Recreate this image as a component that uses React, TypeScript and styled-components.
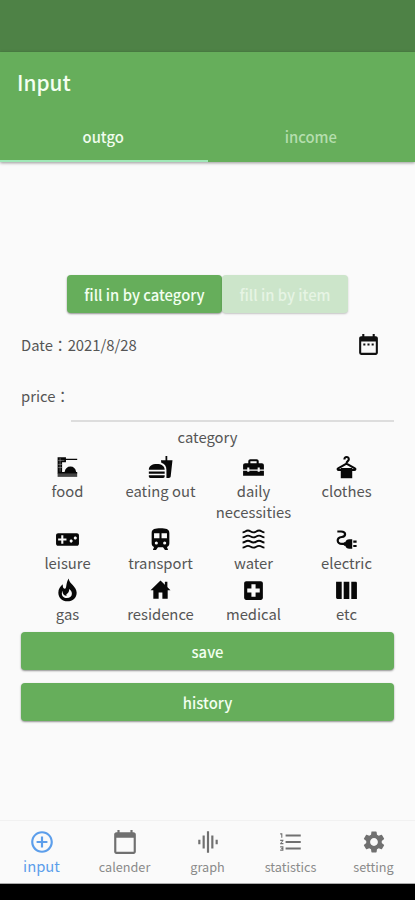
import React from "react";
import styled, { createGlobalStyle } from "styled-components";
import {
  MdDateRange, MdHomeRepairService, MdVideogameAsset,
  MdLocalHospital, MdAddCircleOutline, MdCalendarToday,
  MdGraphicEq, MdFormatListNumbered, MdSettings,
} from "react-icons/md";

const Global = createGlobalStyle`
  * { box-sizing: border-box; }
  body { margin: 0; background: #fafafa; }
  button { font: inherit; border: 0; padding: 0; }
`;

const Screen = styled.div`
  width: 415px;
  height: 900px;
  display: flex;
  flex-direction: column;
  overflow: hidden;
  background: #fafafa;
  color: #555;
  font-family: "Noto Sans CJK JP", "Noto Sans", sans-serif;
  font-size: 14.8px;
  line-height: 21px;
`;

const StatusBar = styled.div`
  height: 52px;
  flex: none;
  background: #4e8246;
`;

const AppBar = styled.header`
  height: 110px;
  flex: none;
  background: #66ae5b;
  color: #f4fff1;
  box-shadow: 0 1px 3px rgba(0, 0, 0, 0.4);
`;

const Title = styled.h1`
  margin: 0;
  height: 60px;
  padding-left: 17px;
  font-size: 20.8px;
  font-weight: 500;
  line-height: 61px;
`;

const Tabs = styled.div`
  display: grid;
  grid-template-columns: 1fr 1fr;
`;

const Tab = styled.button<{ $active?: boolean }>`
  height: 50px;
  padding: 1px 1px 0 0;
  background: none;
  font-weight: 500;
  color: ${(p) => (p.$active ? "#f0fcee" : "#b5deae")};
  border-bottom: ${(p) => (p.$active ? "2px solid #a0e8b7" : "2px solid transparent")};
`;

const Content = styled.main`
  flex: 1;
  padding: 113px 21px 0;
`;

const ToggleGroup = styled.div`
  display: flex;
  justify-content: center;
  height: 38px;
`;

const Button = styled.button<{ $width?: number; $faded?: boolean }>`
  display: block;
  width: ${(p) => (p.$width ? `${p.$width}px` : "100%")};
  height: 38px;
  border-radius: 4px;
  font-weight: 500;
  line-height: 39px;
  color: ${(p) => (p.$faded ? "#e6f4e4" : "#f2fff0")};
  background: ${(p) => (p.$faded ? "#cce5ca" : "#66ae5b")};
  box-shadow: 0 1px 2px rgba(0, 0, 0, ${(p) => (p.$faded ? 0.22 : 0.42)});
`;

const DateRow = styled.div`
  display: flex;
  align-items: center;
  justify-content: space-between;
  height: 26px;
  margin-top: 18px;
  padding-right: 13px;
  svg { color: #111; }
`;

const PriceRow = styled.label`
  display: flex;
  height: 51px;
  margin-top: 14px;
`;

const PriceLabel = styled.span`
  width: 50px;
  padding-top: 14px;
  white-space: nowrap;
`;

const PriceInput = styled.input`
  flex: 1;
  min-width: 0;
  border: 0;
  border-bottom: 2px solid #ddd;
  background: none;
  outline: none;
`;

const Heading = styled.div`
  margin-top: 4px;
  height: 23px;
  text-align: center;
`;

const Categories = styled.div`
  display: grid;
  grid-template-columns: repeat(4, 1fr);
  grid-template-rows: 72px 51px 51px;
  padding-top: 6px;
  margin-right: 1px;
  height: 183px;
`;

const Category = styled.div`
  display: flex;
  flex-direction: column;
  align-items: center;
  text-align: center;
  svg { width: 25px; height: 25px; color: #080808; flex: none; }
`;

const Actions = styled.div`
  display: flex;
  flex-direction: column;
  gap: 13px;
`;

const BottomNav = styled.nav`
  height: 64px;
  flex: none;
  display: grid;
  grid-template-columns: repeat(5, 1fr);
  border-top: 1px solid #f1f1f1;
  border-bottom: 1px solid #aaa;
`;

const NavItem = styled.div<{ $active?: boolean }>`
  display: flex;
  flex-direction: column;
  align-items: center;
  padding-top: 8px;
  gap: ${(p) => (p.$active ? "0" : "1px")};
  color: ${(p) => (p.$active ? "#5c9eeb" : "#8a8a8a")};
  font-size: ${(p) => (p.$active ? "14.8px" : "12.7px")};
  svg { width: 26px; height: 26px; flex: none; color: ${(p) => (p.$active ? "#5c9eeb" : "#707070")}; }
`;

const SystemBar = styled.div`
  height: 16px;
  flex: none;
  background: #000;
`;

const FoodIcon = () => (
  <svg viewBox="0 0 24 24" fill="currentColor">
    <path d="M2.5 2.2h8v1.4h10.8v1.3H10.5V7H6.8v9.2h2.4c.7-3.3 2.7-5.2 5.6-5.2 3 0 5 1.9 5.5 5.2h1V18H2.5z" />
    <path d="M2.5 17.7h18.8V21H2.5z" opacity=".75" />
    <path d="M4.9 3v13M3 5.2h6M3 9h4M3 12h4" stroke="#aaa" strokeWidth=".5" fill="none" />
  </svg>
);

const BurgerIcon = () => (
  <svg viewBox="0 0 24 24" fill="currentColor">
    <path d="M.8 14.2C.8 10.5 4 8.6 8.4 8.6s7.6 1.9 7.6 5.6zM.8 15.9H16v2H.8zM.8 19.5H16v1.1c0 .9-.6 1.4-1.4 1.4H2.2c-.8 0-1.4-.5-1.4-1.4z" />
    <path d="M12.4 5.1h4.4V.9h1.7v4.2h5l-1.7 15.3c-.1 1-.8 1.6-1.8 1.6h-2.3v-7.5c0-3.8-1.8-6.1-4.9-7z" />
  </svg>
);

const HangerIcon = () => (
  <svg viewBox="0 0 24 24">
    <path d="M10 4.2c0-3 4.2-3 4.2-.2 0 2-2.2 1.8-2.2 4.2l8 4.6c1 .7.5 1.6-.5 1.6h-15c-1 0-1.5-.9-.5-1.6l8-4.6" fill="none" stroke="currentColor" strokeWidth="2" />
    <path d="M6.5 12.5h11v9.8h-11z" fill="currentColor" />
  </svg>
);

const TrainIcon = () => (
  <svg viewBox="0 0 24 24">
    <path fill="currentColor" fillRule="evenodd" d="M12 1.2c-5 0-8.5.7-8.5 4.5v9.8c0 2 1 3.2 2.3 3.6L4.7 22h3l1.9-2.6h4.8l1.9 2.6h3l-1.1-2.9c1.3-.4 2.3-1.6 2.3-3.6V5.7c0-3.8-3.5-4.5-8.5-4.5zM5.8 5.9H11v4.8H5.8zm7.2 0h5.2v4.8H13zM8 13.8a1.5 1.5 0 1 1 0 3 1.5 1.5 0 0 1 0-3zm8 0a1.5 1.5 0 1 1 0 3 1.5 1.5 0 0 1 0-3z" />
  </svg>
);

const WaterIcon = () => (
  <svg viewBox="0 0 24 24" fill="none" stroke="currentColor" strokeWidth="1.8">
    {[4.3, 9.2, 14.1, 19].map((y) => (
      <path key={y} d={`M1.5 ${y + 0.8}c2.6 0 2.6-1.7 5.2-1.7s2.6 1.7 5.3 1.7 2.6-1.7 5.3-1.7 2.6 1.7 5.2 1.7`} />
    ))}
  </svg>
);

const PlugIcon = () => (
  <svg viewBox="0 0 24 24">
    <path d="M3.2 4.3h3.6c5 0 5 4.7.7 5.3-5.6.8-5 6.6.3 6.6H12" fill="none" stroke="currentColor" strokeWidth="2.1" />
    <path d="M17.5 11.8v9h-2.8c-2 0-3.3-1-3.9-2.8H9.5v-3.4h1.3c.6-1.8 1.9-2.8 3.9-2.8zM18.5 13h3.2v2h-3.2zM18.5 17.3h3.2v2h-3.2z" fill="currentColor" />
  </svg>
);

const FlameIcon = () => (
  <svg viewBox="0 0 24 24">
    <path fill="currentColor" fillRule="evenodd" d="M13.2.4c0 4.9 7.6 7.2 7.6 13.7 0 5-3.8 8.3-8.8 8.3s-8.8-3.3-8.8-8.2c0-3.6 1.7-5.9 4.3-8.1-.2 2.6.4 4 1.7 4.2C11.6 10.6 10 4.6 13.2.4zM7.2 12.2c-1.7 3.8.3 7 4.1 7 3.2 0 4.9-1.7 4.9-4.1 0-1.8-1-3.3-2.6-4.5.1 3-1.2 4-2.1 4.5-.9.6-.8 1.7.1 2-2.5.4-4.5-1.6-4.4-4.9z" />
  </svg>
);

const HouseIcon = () => (
  <svg viewBox="0 0 24 24" fill="currentColor">
    <path d="M12 2.4l9.6 9.3h-2.7V20h-5.1v-6h-3.6v6H5.1v-8.3H2.4z" />
    <path d="M16.2 3.6h2.4v5.8h-2.4z" />
  </svg>
);

const ColumnsIcon = () => (
  <svg viewBox="0 0 24 24" fill="currentColor">
    <path d="M2 3.5h5.4v16.6H3.3c-.8 0-1.3-.5-1.3-1.3zM9.3 3.5h5.4v16.6H9.3zM16.6 3.5h4.1c.8 0 1.3.5 1.3 1.3v15.3h-5.4z" />
  </svg>
);

const categories = [
  { label: "food", Icon: FoodIcon },
  { label: "eating out", Icon: BurgerIcon },
  { label: "daily necessities", Icon: MdHomeRepairService },
  { label: "clothes", Icon: HangerIcon },
  { label: "leisure", Icon: MdVideogameAsset },
  { label: "transport", Icon: TrainIcon },
  { label: "water", Icon: WaterIcon },
  { label: "electric", Icon: PlugIcon },
  { label: "gas", Icon: FlameIcon },
  { label: "residence", Icon: HouseIcon },
  { label: "medical", Icon: MdLocalHospital },
  { label: "etc", Icon: ColumnsIcon },
];

const navItems = [
  { label: "input", Icon: MdAddCircleOutline },
  { label: "calender", Icon: MdCalendarToday },
  { label: "graph", Icon: MdGraphicEq },
  { label: "statistics", Icon: MdFormatListNumbered },
  { label: "setting", Icon: MdSettings },
];

export default function App() {
  return (
    <Screen>
      <Global />
      <StatusBar />
      <AppBar>
        <Title>Input</Title>
        <Tabs>
          <Tab $active>outgo</Tab>
          <Tab>income</Tab>
        </Tabs>
      </AppBar>
      <Content>
        <ToggleGroup>
          <Button $width={155}>fill in by category</Button>
          <Button $width={126} $faded>fill in by item</Button>
        </ToggleGroup>
        <DateRow>
          <span>Date：2021/8/28</span>
          <MdDateRange size={25} />
        </DateRow>
        <PriceRow>
          <PriceLabel>price：</PriceLabel>
          <PriceInput aria-label="price" />
        </PriceRow>
        <Heading>category</Heading>
        <Categories>
          {categories.map(({ label, Icon }) => (
            <Category key={label}>
              <Icon />
              <span>{label}</span>
            </Category>
          ))}
        </Categories>
        <Actions>
          <Button>save</Button>
          <Button>history</Button>
        </Actions>
      </Content>
      <BottomNav>
        {navItems.map(({ label, Icon }, i) => (
          <NavItem key={label} $active={i === 0}>
            <Icon />
            <span>{label}</span>
          </NavItem>
        ))}
      </BottomNav>
      <SystemBar />
    </Screen>
  );
}
